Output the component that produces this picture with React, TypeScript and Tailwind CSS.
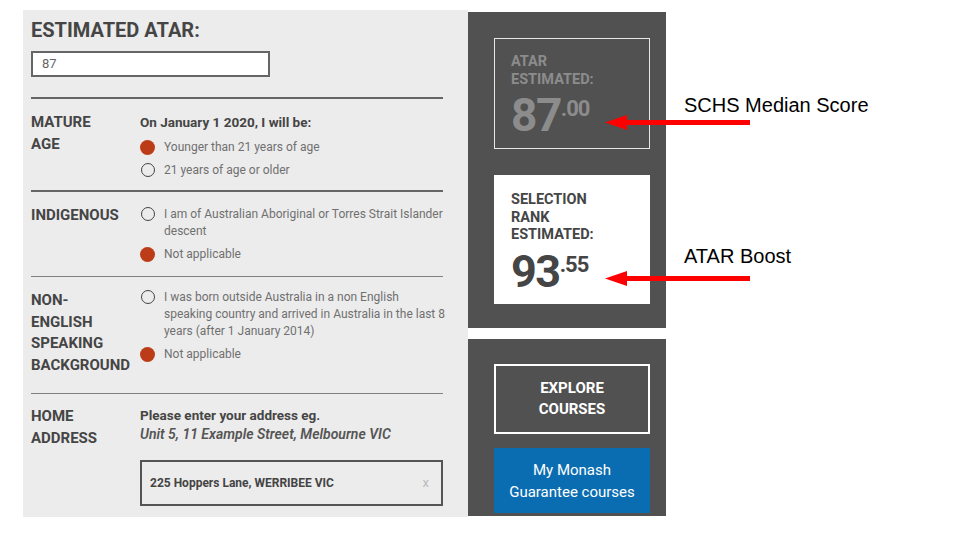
import React from "react";

function Filled() {
  return <div className="w-[15px] h-[15px] rounded-full bg-[#bd3c18] shrink-0" />;
}
function Empty() {
  return <div className="w-[14px] h-[14px] rounded-full border-[1.5px] border-[#444] shrink-0 ml-[0.5px] mr-[0.5px]" />;
}

function Arrow({ top }: { top: string }) {
  return (
    <svg
      className={`absolute left-[605px] ${top}`}
      width="145"
      height="17"
      viewBox="0 0 145 17"
    >
      <path d="M0 8.5 L22 1 L22 6 L145 6 L145 11 L22 11 L22 16 Z" fill="#ff0000" />
    </svg>
  );
}

function LeftPanel() {
  return (
    <div className="w-[445px] h-[507px] bg-[#ececec] pl-[8px] pt-[10px] text-[#454545] shrink-0">
      <h1 className="text-[20px] leading-[20px] font-bold">ESTIMATED ATAR:</h1>
      <div className="mt-[11px] w-[239px] h-[26px] border-2 border-[#666] bg-white pl-[9px] flex items-center text-[13px] text-[#666]">
        87
      </div>
      <div className="mt-[20px] w-[412px]">
        <div className="h-[2px] bg-[#666]" />
        {/* Row 1 */}
        <div className="flex pt-[13px] pb-[8.5px]">
          <div className="w-[109px] shrink-0 text-[15px] leading-[21.5px] font-bold">
            MATURE
            <br />
            AGE
          </div>
          <div className="flex-1">
            <div className="text-[13.5px] leading-[20px] font-bold">On January 1 2020, I will be:</div>
            <div className="mt-[3.5px]">
              <div className="h-[23px] flex items-center gap-[9px]">
                <Filled />
                <span className="text-[12px] text-[#707070]">Younger than 21 years of age</span>
              </div>
              <div className="h-[23px] flex items-center gap-[9px]">
                <Empty />
                <span className="text-[12px] text-[#707070]">21 years of age or older</span>
              </div>
            </div>
          </div>
        </div>
        <div className="h-[2px] bg-[#666]" />
        {/* Row 2 */}
        <div className="flex pt-[13.5px] pb-[13.5px]">
          <div className="w-[109px] shrink-0 text-[15px] leading-[21.5px] font-bold mt-[-1px]">INDIGENOUS</div>
          <div className="flex-1 flex flex-col gap-[6px]">
            <div className="flex items-start gap-[9px]">
              <div className="mt-[1px]">
                <Empty />
              </div>
              <span className="text-[12px] leading-[17px] text-[#707070] whitespace-nowrap">
                I am of Australian Aboriginal or Torres Strait Islander
                <br />
                descent
              </span>
            </div>
            <div className="flex items-start gap-[9px]">
              <div className="mt-[1px]">
                <Filled />
              </div>
              <span className="text-[12px] leading-[17px] text-[#707070]">Not applicable</span>
            </div>
          </div>
        </div>
        <div className="h-[1px] bg-[#808080]" />
        {/* Row 3 */}
        <div className="flex pt-[11.5px] pb-[17px]">
          <div className="w-[109px] shrink-0 text-[15px] leading-[21.5px] font-bold mt-[1.5px]">
            NON-
            <br />
            ENGLISH
            <br />
            SPEAKING
            <br />
            BACKGROUND
          </div>
          <div className="flex-1 flex flex-col gap-[6px]">
            <div className="flex items-start gap-[9px]">
              <div className="mt-[1px]">
                <Empty />
              </div>
              <span className="text-[12px] leading-[17px] text-[#707070] whitespace-nowrap">
                I was born outside Australia in a non English
                <br />
                speaking country and arrived in Australia in the last 8
                <br />
                years (after 1 January 2014)
              </span>
            </div>
            <div className="flex items-start gap-[9px]">
              <div className="mt-[1px]">
                <Filled />
              </div>
              <span className="text-[12px] leading-[17px] text-[#707070]">Not applicable</span>
            </div>
          </div>
        </div>
        <div className="h-[1px] bg-[#808080]" />
        {/* Row 4 */}
        <div className="flex pt-[12px]">
          <div className="w-[109px] shrink-0 text-[15px] leading-[21.5px] font-bold">
            HOME
            <br />
            ADDRESS
          </div>
          <div className="flex-1">
            <div className="text-[13.5px] leading-[19px] font-bold">Please enter your address eg.</div>
            <div className="text-[14px] leading-[18px] font-semibold italic text-[#555]">
              Unit 5, 11 Example Street, Melbourne VIC
            </div>
            <div className="mt-[17px] h-[46px] border-2 border-[#555] flex items-center justify-between pl-[8px] pr-[12px]">
              <span className="text-[12px] font-bold text-[#444]">225 Hoppers Lane, WERRIBEE VIC</span>
              <span className="text-[13px] text-[#bbb]">x</span>
            </div>
          </div>
        </div>
      </div>
    </div>
  );
}

function RightColumn() {
  return (
    <div className="w-[198px] pt-[2px] shrink-0">
      <div className="h-[316px] bg-[#515151] pl-[26px] pt-[26px]">
        <div className="w-[156px] h-[111px] border border-[#e6e6e6] pl-[16px] pt-[14px] text-[#8c8c8c]">
          <div className="text-[14.5px] leading-[17.5px] font-bold">
            ATAR
            <br />
            ESTIMATED:
          </div>
          <div className="flex items-start mt-[4px] font-bold">
            <span className="text-[46px] leading-[46px] tracking-[-1.5px]">87</span>
            <span className="text-[22px] leading-[22px] tracking-[-1px] mt-[6px]">.00</span>
          </div>
        </div>
        <div className="mt-[26px] w-[156px] h-[129px] bg-white pl-[17px] pt-[16px] text-[#454545]">
          <div className="text-[14.5px] leading-[17.5px] font-bold">
            SELECTION
            <br />
            RANK
            <br />
            ESTIMATED:
          </div>
          <div className="flex items-start mt-[5px] font-bold">
            <span className="text-[45px] leading-[45px] tracking-[-1.5px]">93</span>
            <span className="text-[22px] leading-[22px] tracking-[-1px] mt-[5px]">.55</span>
          </div>
        </div>
      </div>
      <div className="mt-[11px] h-[177px] bg-[#515151] pl-[26px] pt-[25px]">
        <div className="w-[156px] h-[70px] border-2 border-white flex items-center justify-center text-center text-white font-bold text-[15px] leading-[21px]">
          EXPLORE
          <br />
          COURSES
        </div>
        <div className="mt-[14px] w-[156px] h-[65px] bg-[#0b6db1] flex items-center justify-center text-center text-white text-[15px] leading-[22px]">
          My Monash
          <br />
          Guarantee courses
        </div>
      </div>
    </div>
  );
}

function Annotations() {
  return (
    <div className="ml-[18px] font-['Liberation_Sans',sans-serif] text-black text-[20px] leading-[20px] whitespace-nowrap">
      <div className="mt-[85px]">SCHS Median Score</div>
      <div className="mt-[131px]">ATAR Boost</div>
    </div>
  );
}

export default function App() {
  return (
    <div className="relative w-[960px] h-[540px] bg-white overflow-hidden font-['Roboto',sans-serif]">
      <div className="flex pl-[23px] pt-[10px]">
        <LeftPanel />
        <RightColumn />
        <Annotations />
      </div>
      <Arrow top="top-[114px]" />
      <Arrow top="top-[270px]" />
    </div>
  );
}
